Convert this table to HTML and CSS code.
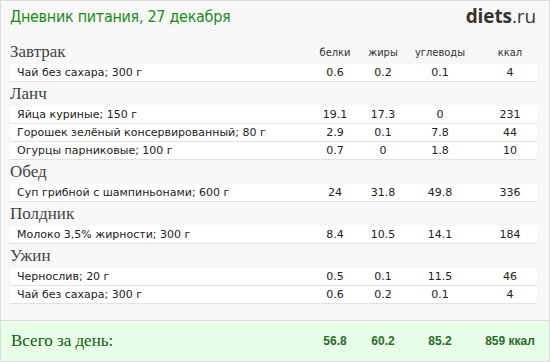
FILE: index.html
```html
<!DOCTYPE html>
<html lang="ru">
<head>
<meta charset="utf-8">
<title>Дневник питания</title>
<link rel="stylesheet" href="styles.css">
</head>
<body>
<div class="page">
  <div class="inner">
    <header class="header">
      <h1 class="title">Дневник питания, 27 декабря</h1>
      <div class="logo"><b>diets</b>.ru</div>
    </header>

    <section class="meal">
      <div class="meal-head">
        <h2 class="meal-name">Завтрак</h2>
        <span class="col c1">белки</span>
        <span class="col c2">жиры</span>
        <span class="col c3">углеводы</span>
        <span class="col c4">ккал</span>
      </div>
      <div class="row"><span class="name">Чай без сахара; 300 г</span><span class="col c1">0.6</span><span class="col c2">0.2</span><span class="col c3">0.1</span><span class="col c4">4</span></div>
    </section>

    <section class="meal">
      <div class="meal-head"><h2 class="meal-name">Ланч</h2></div>
      <div class="row"><span class="name">Яйца куриные; 150 г</span><span class="col c1">19.1</span><span class="col c2">17.3</span><span class="col c3">0</span><span class="col c4">231</span></div>
      <div class="row"><span class="name">Горошек зелёный консервированный; 80 г</span><span class="col c1">2.9</span><span class="col c2">0.1</span><span class="col c3">7.8</span><span class="col c4">44</span></div>
      <div class="row"><span class="name">Огурцы парниковые; 100 г</span><span class="col c1">0.7</span><span class="col c2">0</span><span class="col c3">1.8</span><span class="col c4">10</span></div>
    </section>

    <section class="meal">
      <div class="meal-head"><h2 class="meal-name">Обед</h2></div>
      <div class="row"><span class="name">Суп грибной с шампиньонами; 600 г</span><span class="col c1">24</span><span class="col c2">31.8</span><span class="col c3">49.8</span><span class="col c4">336</span></div>
    </section>

    <section class="meal">
      <div class="meal-head"><h2 class="meal-name">Полдник</h2></div>
      <div class="row"><span class="name">Молоко 3,5% жирности; 300 г</span><span class="col c1">8.4</span><span class="col c2">10.5</span><span class="col c3">14.1</span><span class="col c4">184</span></div>
    </section>

    <section class="meal">
      <div class="meal-head"><h2 class="meal-name">Ужин</h2></div>
      <div class="row"><span class="name">Чернослив; 20 г</span><span class="col c1">0.5</span><span class="col c2">0.1</span><span class="col c3">11.5</span><span class="col c4">46</span></div>
      <div class="row"><span class="name">Чай без сахара; 300 г</span><span class="col c1">0.6</span><span class="col c2">0.2</span><span class="col c3">0.1</span><span class="col c4">4</span></div>
    </section>
  </div>

  <footer class="totals">
    <span class="totals-label">Всего за день:</span>
    <span class="col c1">56.8</span>
    <span class="col c2">60.2</span>
    <span class="col c3">85.2</span>
    <span class="col c4">859 ккал</span>
  </footer>
</div>
</body>
</html>
```

FILE: styles.css
```css
html, body {
  margin: 0;
  padding: 0;
  background: #ffffff;
}

.page {
  box-sizing: border-box;
  width: 550px;
  height: 362px;
  border: 1px solid #dcdcdc;
  background: #f7f7f7;
  display: flex;
  flex-direction: column;
}

.inner {
  padding: 0 12px 0 9px;
  flex: 1;
}

.header {
  display: flex;
  justify-content: space-between;
  align-items: flex-start;
  height: 40px;
}

.title {
  margin: 6px 0 0 0;
  font-family: "DejaVu Sans Condensed", "DejaVu Sans", sans-serif;
  font-weight: normal;
  font-size: 16px;
  line-height: 20px;
  letter-spacing: -0.3px;
  color: #1a8c1a;
}

.logo {
  margin-top: 2px;
  margin-right: 1px;
  font-family: "Open Sans", "Liberation Sans", sans-serif;
  font-size: 19px;
  line-height: 26px;
  color: #3a3a3a;
  letter-spacing: -0.1px;
}

.logo b {
  font-weight: 700;
  color: #333333;
}

.meal-head {
  display: grid;
  grid-template-columns: 1fr 50px 46px 77px 54px;
  align-items: end;
  height: 24px;
}

.meal:first-of-type .meal-head {
  height: 23px;
}

.meal-name {
  margin: 0;
  font-family: "Liberation Serif", serif;
  font-weight: normal;
  font-size: 17px;
  line-height: 20px;
  padding-bottom: 2px;
  color: #444444;
}

.meal-head .col {
  font-family: "DejaVu Sans Condensed", "DejaVu Sans", sans-serif;
  font-size: 11px;
  line-height: 13px;
  padding-bottom: 5px;
  color: #333333;
}

.row {
  display: grid;
  grid-template-columns: 1fr 50px 46px 77px 54px;
  align-items: center;
  height: 17px;
  background: #ffffff;
  border-bottom: 1px solid #e2e2e2;
  font-family: "DejaVu Sans", sans-serif;
  font-size: 11px;
  color: #222222;
}

.name {
  padding-left: 7px;
  white-space: nowrap;
}

.col {
  text-align: center;
}

.c3 {
  padding-right: 9px;
}

.totals {
  display: grid;
  grid-template-columns: 1fr 50px 46px 77px 54px;
  align-items: center;
  height: 40px;
  padding: 0 12px 0 9px;
  background: #e8fde8;
  border-top: 1px solid #dcdcdc;
}

.totals-label {
  font-family: "Liberation Serif", serif;
  font-size: 17px;
  color: #0b5f0b;
  padding-left: 1px;
}

.totals .col {
  font-family: "Liberation Sans", sans-serif;
  font-weight: bold;
  font-size: 12px;
  color: #2b6a2b;
  white-space: nowrap;
}
```
